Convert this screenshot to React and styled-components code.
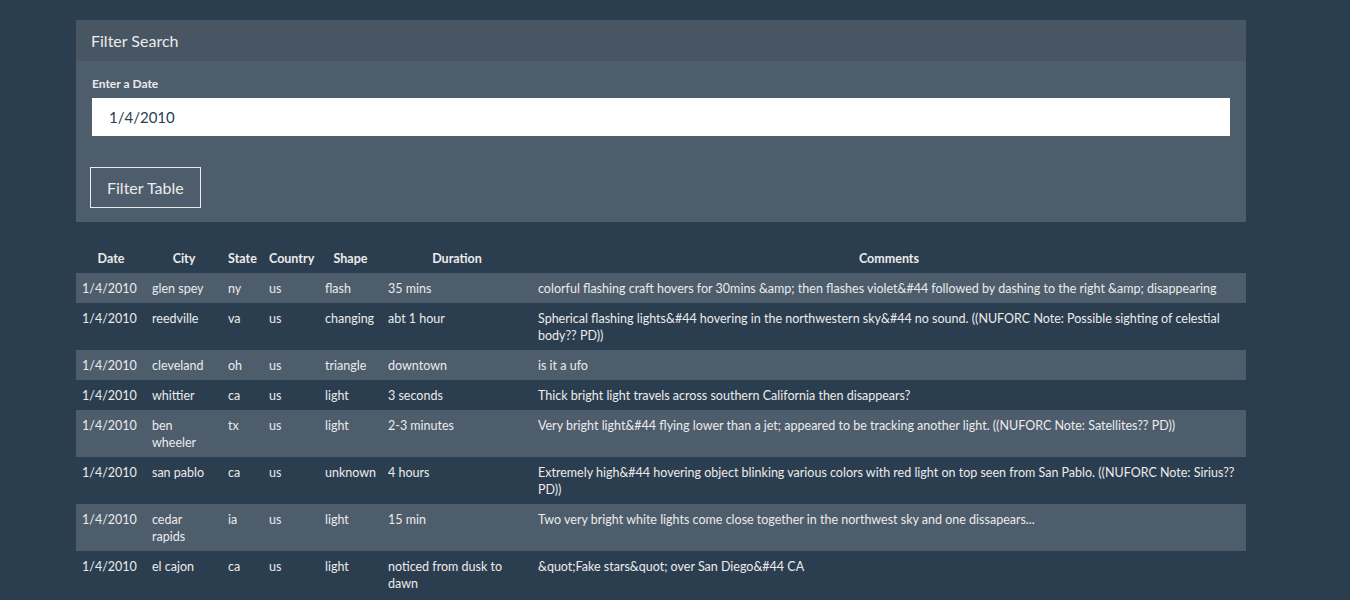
import React from "react"
import styled, { createGlobalStyle } from "styled-components"

const GlobalStyle = createGlobalStyle`
  html, body {
    margin: 0;
    padding: 0;
    background: #2b3e50;
  }
  body {
    font-family: Lato, "Open Sans", sans-serif;
    color: #ebebeb;
    overflow-y: scroll;
  }
  ::-webkit-scrollbar {
    width: 15px;
    background: #f1f1f1;
  }
  ::-webkit-scrollbar-thumb {
    background: #c1c1c1;
    border-left: 2px solid #f1f1f1;
    border-right: 2px solid #f1f1f1;
  }
`

const sightings = [
  { city: "glen spey", state: "ny", shape: "flash", duration: "35 mins", comments: "colorful flashing craft hovers for 30mins &amp; then flashes violet&#44 followed by dashing to the right &amp; disappearing" },
  { city: "reedville", state: "va", shape: "changing", duration: "abt 1 hour", comments: "Spherical flashing lights&#44 hovering in the northwestern sky&#44 no sound. ((NUFORC Note: Possible sighting of celestial body?? PD))" },
  { city: "cleveland", state: "oh", shape: "triangle", duration: "downtown", comments: "is it a ufo" },
  { city: "whittier", state: "ca", shape: "light", duration: "3 seconds", comments: "Thick bright light travels across southern California then disappears?" },
  { city: "ben wheeler", state: "tx", shape: "light", duration: "2-3 minutes", comments: "Very bright light&#44 flying lower than a jet; appeared to be tracking another light. ((NUFORC Note: Satellites?? PD))" },
  { city: "san pablo", state: "ca", shape: "unknown", duration: "4 hours", comments: "Extremely high&#44 hovering object blinking various colors with red light on top seen from San Pablo. ((NUFORC Note: Sirius?? PD))" },
  { city: "cedar rapids", state: "ia", shape: "light", duration: "15 min", comments: "Two very bright white lights come close together in the northwest sky and one dissapears..." },
  { city: "el cajon", state: "ca", shape: "light", duration: "noticed from dusk to dawn", comments: "&quot;Fake stars&quot; over San Diego&#44 CA" },
]

const columns = [
  { label: "Date", width: 70 },
  { label: "City", width: 76 },
  { label: "State", width: 41 },
  { label: "Country", width: 56 },
  { label: "Shape", width: 63 },
  { label: "Duration", width: 150 },
  { label: "Comments", width: 714 },
]

const Page = styled.div`
  width: 1170px;
  margin-left: 76px;
  padding: 20px 0 40px;
`

const Panel = styled.section`
  background: #4e5d6c;
`

const PanelHeading = styled.div`
  background: #485563;
  padding: 0 15px;
  height: 41px;
  display: flex;
  align-items: center;
  font-size: 16px;
  color: #ebebeb;
`

const PanelBody = styled.div`
  padding: 15px 16px 14px 14px;
`

const Label = styled.label`
  display: block;
  margin-left: 2px;
  font-size: 12px;
  font-weight: 700;
  margin-bottom: 7px;
`

const DateInput = styled.input`
  display: block;
  box-sizing: border-box;
  width: calc(100% - 2px);
  margin-left: 2px;
  height: 38px;
  border: 0;
  background: #fff;
  padding: 0 17px;
  font-family: Lato, "Open Sans", sans-serif;
  font-size: 15px;
  color: #2b3e50;
  outline: none;
`

const Button = styled.button`
  margin-top: 31px;
  height: 41px;
  padding: 0 16px;
  background: transparent;
  border: 1px solid #ebebeb;
  color: #ebebeb;
  font-family: Lato, "Open Sans", sans-serif;
  font-size: 16px;
`

const Table = styled.table`
  width: 1170px;
  margin-top: 20px;
  border-collapse: collapse;
  table-layout: fixed;
  font-size: 12.5px;
  line-height: 17px;
`

const Th = styled.th`
  padding: 8px 6px 6px;
  font-weight: 700;
  text-align: center;
  font-size: 12.5px;
`

const Row = styled.tr`
  background: ${p => (p.$striped ? "#4e5d6c" : "transparent")};
`

const Td = styled.td`
  padding: 7px 6px 6px;
  vertical-align: top;
  text-align: left;
`

export default function App() {
  return (
    <>
      <GlobalStyle />
      <Page>
        <Panel>
          <PanelHeading>Filter Search</PanelHeading>
          <PanelBody>
            <Label htmlFor="datetime">Enter a Date</Label>
            <DateInput id="datetime" type="text" defaultValue="1/4/2010" />
            <Button>Filter Table</Button>
          </PanelBody>
        </Panel>
        <Table>
          <colgroup>
            {columns.map(c => (
              <col key={c.label} style={{ width: c.width }} />
            ))}
          </colgroup>
          <thead>
            <tr>
              {columns.map(c => (
                <Th key={c.label}>{c.label}</Th>
              ))}
            </tr>
          </thead>
          <tbody>
            {sightings.map((s, i) => (
              <Row key={i} $striped={i % 2 === 0}>
                <Td>1/4/2010</Td>
                <Td>{s.city}</Td>
                <Td>{s.state}</Td>
                <Td>us</Td>
                <Td>{s.shape}</Td>
                <Td>{s.duration}</Td>
                <Td>{s.comments}</Td>
              </Row>
            ))}
          </tbody>
        </Table>
      </Page>
    </>
  )
}
